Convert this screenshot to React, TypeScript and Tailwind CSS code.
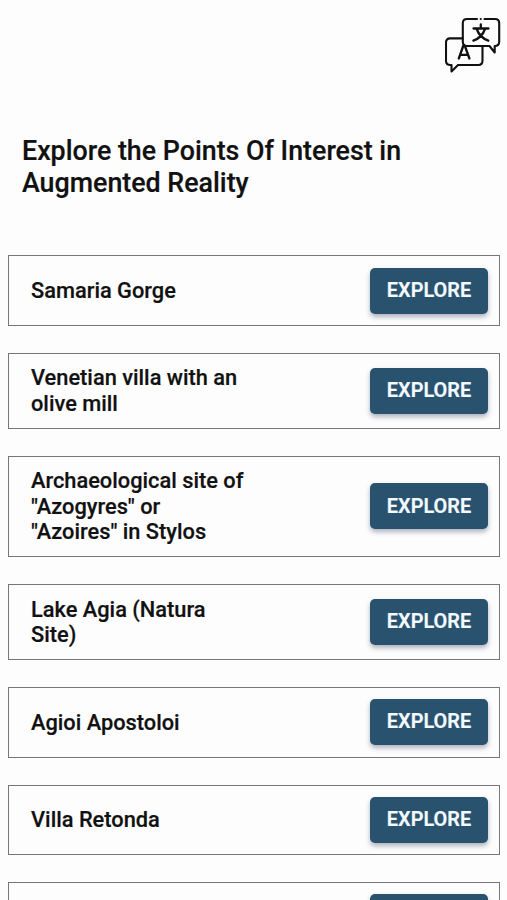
import React from 'react';

interface PointOfInterest {
  id: number;
  name: string;
  height: string;
}

const points: PointOfInterest[] = [
  { id: 1, name: 'Samaria Gorge', height: 'h-[70.4px]' },
  { id: 2, name: 'Venetian villa with an olive mill', height: 'h-[76px]' },
  { id: 3, name: 'Archaeological site of "Azogyres" or "Azoires" in Stylos', height: 'h-[101.6px]' },
  { id: 4, name: 'Lake Agia (Natura Site)', height: 'h-[76px]' },
  { id: 5, name: 'Agioi Apostoloi', height: 'h-[70.4px]' },
  { id: 6, name: 'Villa Retonda', height: 'h-[70.4px]' },
  { id: 7, name: '', height: 'h-[70.4px]' },
];

const LanguageIcon: React.FC = () => (
  <svg viewBox="0 0 56 56" className="w-14 h-14" fill="none" stroke="#111111" strokeWidth="2.1" strokeLinecap="round" strokeLinejoin="round">
    {/* Front bubble */}
    <path d="M32 2H22q-4.2 0-4.2 4.2v18.6q0 4.2 4.2 4.2h22.500l5.200 6.500v-6.500q4.500 0 4.500-4.200V6.200Q54.200 2 50 2H39.500M35.700 2h.1" />
    {/* Back bubble */}
    <path d="M17.800 21.400H5.200Q1 21.400 1 25.600v18.200Q1 48 5.200 48h1.300v6.500l6.500-6.500h20.300q4.200 0 4.200-4.200V29" />
    <path strokeWidth="2.3" d="M13.800 41.500l4.400-12.500h1.700L24.400 41.500M15.500 37.800h7.300" />
    <path strokeWidth="2.3" d="M28.500 11.500h15M35.800 7.500v4M31.700 12q3 8.500 11.600 11.700M40 12q-3 8.500-11.600 11.700" />
  </svg>
);

const PointCard: React.FC<{ point: PointOfInterest }> = ({ point }) => (
  <div className={`flex shrink-0 items-center justify-between border border-[#777777] pl-[22px] pr-[11px] ${point.height}`}>
    <h2 className="w-[216px] text-[21.8px] leading-[25.6px] font-medium [-webkit-text-stroke:0.2px_#111111]">{point.name}</h2>
    <button className="h-[46px] w-[118px] rounded-[5px] bg-[#29526e] text-[19.9px] font-semibold text-[#f4faff] shadow-[0_3px_5px_rgba(30,40,70,0.35)] [-webkit-text-stroke:0.2px_#f4faff]">
      EXPLORE
    </button>
  </div>
);

export default function App() {
  return (
    <main className="h-[900px] overflow-hidden bg-[#fdfdfd] font-['Roboto',sans-serif] text-[#111111]">
      <header className="flex h-[136.4px] justify-end pt-[17px] pr-[6px]">
        <button className="h-14 w-14" aria-label="Change language">
          <LanguageIcon />
        </button>
      </header>
      <h1 className="h-[119px] pl-[22px] text-[26.8px] leading-[31.4px] font-medium [-webkit-text-stroke:0.2px_#111111]">
        Explore the Points Of Interest in<br />Augmented Reality
      </h1>
      <section className="flex flex-col gap-[26.96px] pl-2 pr-[7px]">
        {points.map((point) => (
          <PointCard key={point.id} point={point} />
        ))}
      </section>
    </main>
  );
}
